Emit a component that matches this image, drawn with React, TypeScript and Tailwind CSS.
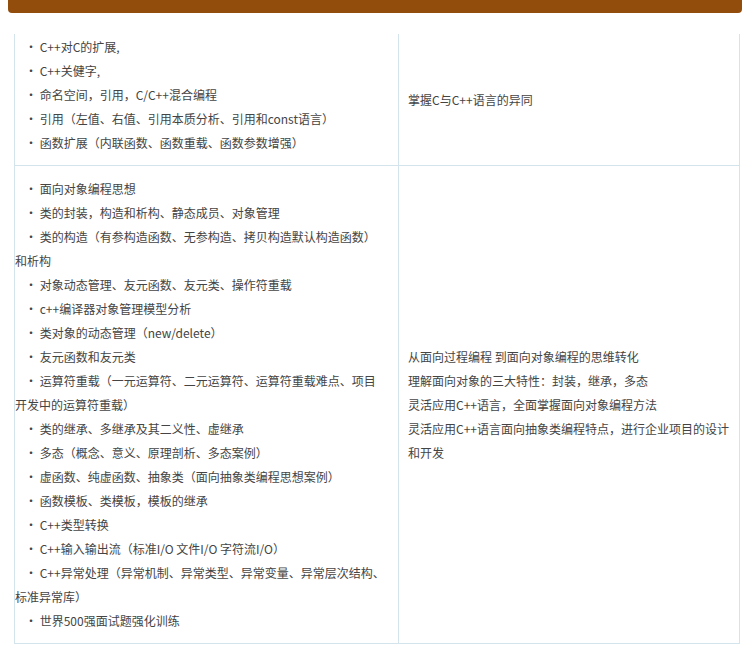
export default function App() {
  const left1 = ["・ C++对C的扩展,", "・ C++关健字,", "・ 命名空间，引用，C/C++混合编程", "・ 引用（左值、右值、引用本质分析、引用和const语言）", "・ 函数扩展（内联函数、函数重载、函数参数增强）"];
  const left2 = [
    "・ 面向对象编程思想",
    "・ 类的封装，构造和析构、静态成员、对象管理",
    "・ 类的构造（有参构造函数、无参构造、拷贝构造默认构造函数）",
    "和析构",
    "・ 对象动态管理、友元函数、友元类、操作符重载",
    "・ c++编译器对象管理模型分析",
    "・ 类对象的动态管理（new/delete）",
    "・ 友元函数和友元类",
    "・ 运算符重载（一元运算符、二元运算符、运算符重载难点、项目",
    "开发中的运算符重载）",
    "・ 类的继承、多继承及其二义性、虚继承",
    "・ 多态（概念、意义、原理剖析、多态案例）",
    "・ 虚函数、纯虚函数、抽象类（面向抽象类编程思想案例）",
    "・ 函数模板、类模板，模板的继承",
    "・ C++类型转换",
    "・ C++输入输出流（标准I/O 文件I/O 字符流I/O）",
    "・ C++异常处理（异常机制、异常类型、异常变量、异常层次结构、",
    "标准异常库）",
    "・ 世界500强面试题强化训练",
  ];
  const right2 = ["从面向过程编程 到面向对象编程的思维转化", "理解面向对象的三大特性：封装，继承，多态", "灵活应用C++语言，全面掌握面向对象编程方法", "灵活应用C++语言面向抽象类编程特点，进行企业项目的设计", "和开发"];
  const line = (t: string, i: number) => (
    <div key={i} className="h-6 leading-6 whitespace-nowrap">{t}</div>
  );
  return (
    <div className="w-[750px] h-[646px] bg-white overflow-hidden text-[12px] text-[#444]" style={{ fontFamily: '"Noto Sans CJK SC", sans-serif' }}>
      <div className="mx-2 h-[13px] bg-[#924c0c] rounded-b-sm"></div>
      <table className="ml-[14px] mt-[21px] w-[726px] border-collapse">
        <tbody>
          <tr className="h-[130px]">
            <td className="w-[384px] border-x border-b border-[#d4e4ec] pl-[10px] pt-[1px] pb-[10px] align-top">{left1.map(line)}</td>
            <td className="border-x border-b border-[#d4e4ec] pl-[9px] align-middle">掌握C与C++语言的异同</td>
          </tr>
          <tr className="h-[477px]">
            <td className="border border-[#d4e4ec] pl-[10px] pt-[11px] pb-[10px] align-top">
              {left2.map((t, i) => (
                <div key={i} className={"h-6 leading-6 whitespace-nowrap " + (t.startsWith("・") ? "" : "-ml-[10px]")}>{t}</div>
              ))}
            </td>
            <td className="border border-[#d4e4ec] pl-[9px] align-middle">{right2.map(line)}</td>
          </tr>
        </tbody>
      </table>
    </div>
  );
}
